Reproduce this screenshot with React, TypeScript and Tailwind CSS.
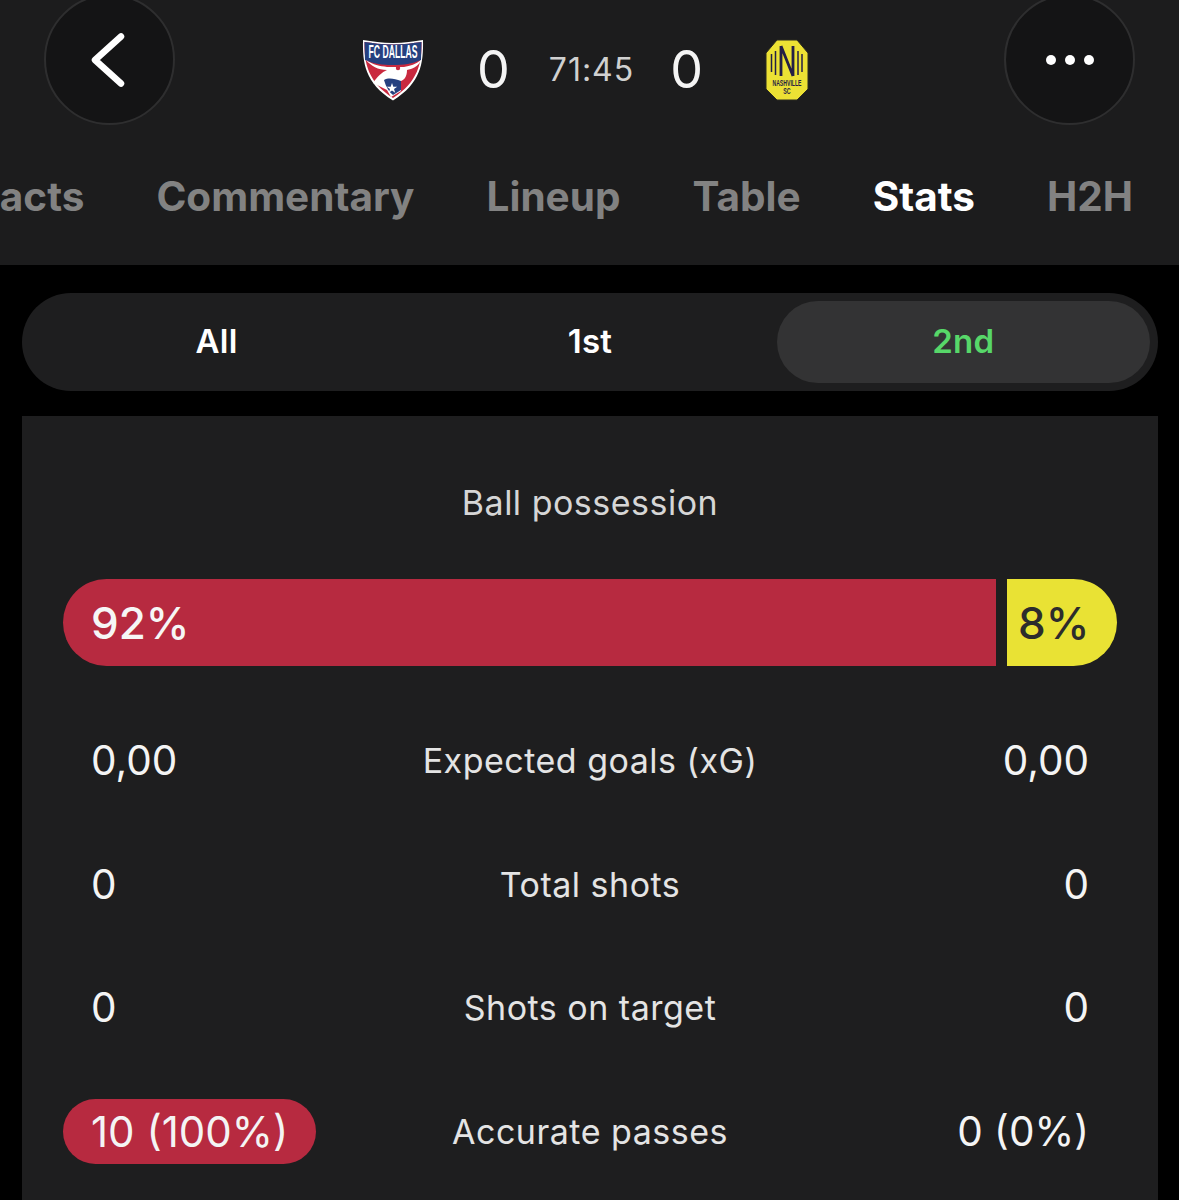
const font = { fontFamily: "Inter, 'Noto Sans', sans-serif" };
const logoFont = { fontFamily: "'Liberation Sans', sans-serif" };

function DallasLogo() {
  return (
    <svg width="62" height="62" viewBox="0 0 62 62">
      <path d="M31 4 C42 4 52 2.500 61 1 C61.500 24 59 44 31 61.500 C3 44 .5 24 1 1 C10 2.500 20 4 31 4Z" fill="#fff" />
      <path d="M31 5.500 C42 5.500 51 4 59.500 3 C60 24 56 43 31 59 C6 43 2 24 2.500 3 C11 4 20 5.500 31 5.500Z" fill="#c9293f" />
      <path d="M31 5.500 C42 5.500 51 4 59.500 3 L59 21 C50 25 42 26 31 26 C20 26 12 25 3 21 L2.500 3 C11 4 20 5.500 31 5.500Z" fill="#25407f" />
      <path d="M4 21 C11 26 18 27 25 28 L42 28 C48 27 54 25 59 21 C56 28 50 30 45 31 C45 38 42 41 39 42 L39 52 L29 58 L25 51 L11 44 C15 38 20 33 25 31 C16 31 9 27 4 21Z" fill="#fff" />
      <path d="M22 41 C27 38 33 40 39 42 L39 51 L31 56 C27 53 24 48 22 41Z" fill="#25407f" />
      <path d="M30 44 L31.300 47.700 L35.200 47.700 L32 50 L33.200 53.700 L30 51.400 L26.800 53.700 L28 50 L24.800 47.700 L28.700 47.700Z" fill="#fff" />
      <circle cx="36" cy="29" r="2.200" fill="#c9293f" />
      <text transform="translate(31 19) scale(.48 1)" textAnchor="middle" fill="#fff" fontSize="18" fontWeight="700" style={logoFont}>FC DALLAS</text>
    </svg>
  );
}

function NashvilleLogo() {
  return (
    <svg width="44" height="62" viewBox="0 0 44 62">
      <path d="M12 1 L32 1 L43 14 L43 50 L32 61 L12 61 L1 50 L1 14Z" fill="#ece134" stroke="#2a2a20" strokeWidth="1" strokeLinejoin="round" />
      <g stroke="#241f45" fill="none">
        <path d="M6.500 15 V33 M10.500 12 V36 M33 12 V36 M37 15 V33" strokeWidth="1.500" />
        <path d="M16 7 V37 M28 7 V37 M16 7 L28 37" strokeWidth="2.800" />
      </g>
      <text transform="translate(22 47) scale(.62 1)" textAnchor="middle" fill="#241f45" fontSize="8.300" fontWeight="700" style={logoFont}>NASHVILLE</text>
      <text transform="translate(22 55) scale(.64 1)" textAnchor="middle" fill="#241f45" fontSize="8.300" fontWeight="700" style={logoFont}>SC</text>
    </svg>
  );
}

function RoundButton({ children }: { children: React.ReactNode }) {
  return (
    <div className="flex h-[131px] w-[131px] shrink-0 items-center justify-center rounded-full border-2 border-[#2e2e2f] bg-[#141415]">
      {children}
    </div>
  );
}

function StatRow({ left, label, right, pill }: { left: string; label: string; right: string; pill?: boolean }) {
  return (
    <div className="flex h-[123.5px] items-center justify-between">
      <div className="w-[300px]">
        <span className={`inline-flex h-[65px] items-center text-[#f4f4f4] ${pill ? "rounded-full bg-[#b72a40] px-[28px] text-[42px]" : "pl-[28px] pt-[2px] text-[40.500px]"}`}>
          {left}
        </span>
      </div>
      <div className="text-[34px] tracking-[0.5px] text-[#e4e4e4]">{label}</div>
      <div className="w-[300px] pr-[28px] pt-[2px] text-right text-[40.500px] text-[#f4f4f4]">{right}</div>
    </div>
  );
}

export default function App() {
  return (
    <div style={font} className="h-[1200px] w-[1179px] overflow-hidden bg-black">
      <header className="flex h-[265px] flex-col bg-[#1c1c1d]">
        <div className="-mt-[6px] flex items-center justify-between px-[44px]">
          <RoundButton>
            <svg className="mr-[6px]" width="36" height="58" viewBox="0 0 36 58" fill="none" stroke="#fff" strokeWidth="6.500" strokeLinecap="round" strokeLinejoin="round">
              <path d="M32 5.500 L6 29 L32 52.500" />
            </svg>
          </RoundButton>
          <div className="mt-[20px] flex items-center pr-[8px]">
            <DallasLogo />
            <span className="ml-[53px] text-[52px] leading-none text-[#f4f4f4]">0</span>
            <span className="ml-[39px] text-[32px] leading-none tracking-[1px] text-[#d0d0d0]">71:45</span>
            <span className="ml-[36px] text-[52px] leading-none text-[#f4f4f4]">0</span>
            <div className="ml-[62px]"><NashvilleLogo /></div>
          </div>
          <RoundButton>
            <div className="flex gap-[9px]">
              <span className="h-[10px] w-[10px] rounded-full bg-white" />
              <span className="h-[10px] w-[10px] rounded-full bg-white" />
              <span className="h-[10px] w-[10px] rounded-full bg-white" />
            </div>
          </RoundButton>
        </div>
        <div className="mt-[47px] flex justify-end gap-[72px] overflow-hidden pr-[46px] text-[40.500px] font-bold leading-[50px] text-[#828282]">
          <span>Facts</span>
          <span>Commentary</span>
          <span>Lineup</span>
          <span>Table</span>
          <span className="text-white">Stats</span>
          <span>H2H</span>
        </div>
      </header>
      <div className="pl-[22px] pr-[21px] pt-[28px]">
        <div className="grid h-[98px] grid-cols-3 items-stretch rounded-full bg-[#1e1e1f] p-[8px] text-[33px] font-semibold tracking-[0.3px]">
          <div className="flex items-center justify-center text-white">All</div>
          <div className="flex items-center justify-center text-white">1st</div>
          <div className="flex items-center justify-center rounded-full bg-[#333334] text-[#57d769]">2nd</div>
        </div>
        <section className="mt-[25px] h-[800px] bg-[#1e1e1f] px-[41px]">
          <div className="flex h-[163px] items-center justify-center pt-[9px] text-[34px] tracking-[0.5px] text-[#d6d6d6]">Ball possession</div>
          <div className="flex h-[87px] gap-[11px] text-[44px] font-medium">
            <div className="flex w-[933px] items-center rounded-l-[44px] bg-[#b72a40] pl-[28px] pt-[1px] text-[#f6f6f6]">92%</div>
            <div className="flex flex-1 items-center rounded-r-[44px] bg-[#e9e234] pl-[11px] pt-[1px] text-[#2c2c2c]">8%</div>
          </div>
          <div className="mt-[33px]">
            <StatRow left="0,00" label="Expected goals (xG)" right="0,00" />
            <StatRow left="0" label="Total shots" right="0" />
            <StatRow left="0" label="Shots on target" right="0" />
            <StatRow left="10 (100%)" label="Accurate passes" right="0 (0%)" pill />
          </div>
        </section>
      </div>
    </div>
  );
}
